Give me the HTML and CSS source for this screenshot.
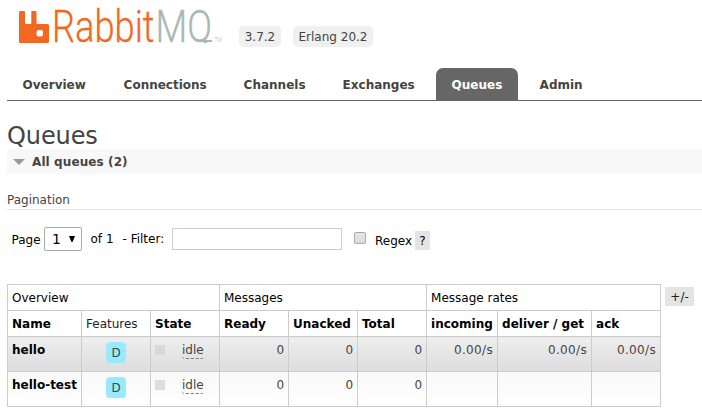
FILE: index.html
```html
<!DOCTYPE html>
<html lang="en">
<head>
<meta charset="utf-8">
<title>RabbitMQ Management</title>
<link rel="stylesheet" href="styles.css">
</head>
<body>
<header class="header">
  <svg class="logo" width="210" height="43" viewBox="0 0 210 43">
    <path class="mark" d="M1 11h4q1 0 1 1v11q0 1 1 1h4.300q1 0 1-1V12q0-1 1-1h3.200q1 0 1 1v11q0 1 1 1h10q1.500 0 1.500 1.500V41.500q0 1.500-1.500 1.500H1Q0 43 0 42V12Q0 11 1 11zM19.500 30q-2 0-2 2v2.500q0 2 2 2h2.500q2 0 2-2v-2.500q0-2-2-2z"/>
    <text class="rabbit" x="33" y="42" textLength="102.500" lengthAdjust="spacingAndGlyphs">Rabbit</text>
    <text class="mq" x="136.500" y="42" textLength="56.500" lengthAdjust="spacingAndGlyphs">MQ</text>
    <path class="tail" d="M182 41h11"/>
    <text class="tm" x="195.500" y="42" textLength="7.500" lengthAdjust="spacingAndGlyphs">TM</text>
  </svg>
  <span class="version v1">3.7.2</span>
  <span class="version v2">Erlang 20.2</span>
</header>
<nav class="tabs">
  <a class="overview">Overview</a>
  <a class="connections">Connections</a>
  <a class="channels">Channels</a>
  <a class="exchanges">Exchanges</a>
  <a class="queues selected">Queues</a>
  <a class="admin">Admin</a>
</nav>
<main>
  <h1>Queues</h1>
  <h2><svg width="12" height="6" viewBox="0 0 12 6"><path d="M0 0h12L6 6z"/></svg><span>All queues (2)</span></h2>
  <h3>Pagination</h3>
  <div class="filters">
    <span class="page">Page</span>
    <span class="select"><span>1</span><svg width="6" height="6" viewBox="0 0 6 6"><path d="M0 0h6L3.500 6h-1z"/></svg></span>
    <span class="of">of 1</span>
    <span class="label">- Filter:</span>
    <span class="input"></span>
    <span class="checkbox"></span>
    <span class="regex">Regex</span>
    <span class="help">?</span>
  </div>
  <div class="listing">
    <table>
      <colgroup><col class="c74"><col class="c69"><col class="c69"><col class="c69"><col class="c69"><col class="c69"><col class="c71"><col class="c94"><col class="c69"></colgroup>
      <thead>
        <tr><th colspan="3">Overview</th><th colspan="3">Messages</th><th colspan="3">Message rates</th></tr>
        <tr><th class="b">Name</th><th><span class="feat">Features</span></th><th class="b">State</th><th class="b">Ready</th><th class="b">Unacked</th><th class="b">Total</th><th class="b">incoming</th><th class="b">deliver / get</th><th class="b">ack</th></tr>
      </thead>
      <tbody>
        <tr class="alt"><td class="name">hello</td><td class="c"><span class="durable">D</span></td><td><span class="state"><i></i><abbr>idle</abbr></span></td><td class="r">0</td><td class="r">0</td><td class="r">0</td><td class="r rate">0.00/s</td><td class="r rate">0.00/s</td><td class="r rate">0.00/s</td></tr>
        <tr class="plain"><td class="name">hello-test</td><td class="c"><span class="durable">D</span></td><td><span class="state"><i></i><abbr>idle</abbr></span></td><td class="r">0</td><td class="r">0</td><td class="r">0</td><td></td><td></td><td></td></tr>
      </tbody>
    </table>
    <span class="columns">+/-</span>
  </div>
</main>
</body>
</html>
```
FILE: styles.css
```css
* { box-sizing: border-box; }
body { margin: 0; padding-left: 7px; height: 420px; overflow: hidden; background: #fff; color: #444; font: 12px/16px "DejaVu Sans", sans-serif; white-space: nowrap; }
.header { display: flex; height: 68px; padding-left: 12px; }
.logo { flex: none; overflow: hidden; }
.mark { fill: #f26822; fill-rule: evenodd; }
.rabbit, .mq { font: 300 44.500px Roboto, sans-serif; }
.rabbit { fill: #f26822; stroke: #f26822; stroke-width: .3px; }
.mq { fill: #a9b8b1; stroke: #a9b8b1; stroke-width: .3px; }
.tail { stroke: #a9b8b1; stroke-width: 2px; }
.tm { font: 300 7px Roboto, sans-serif; fill: #a9b8b1; }
.version { height: 21px; margin-top: 26px; line-height: 22px; text-align: center; background: #f0f0f0; border-radius: 5px; }
.v1 { width: 42px; margin-left: 10px; }
.v2 { width: 80px; margin-left: 12px; }
.tabs { display: flex; height: 33px; border-bottom: 1px solid #666; font-weight: bold; }
.tabs a { padding-left: 15.6px; line-height: 34px; }
.tabs .overview { width: 101px; }
.tabs .connections { width: 120px; }
.tabs .channels { width: 99px; }
.tabs .exchanges { width: 109px; }
.tabs .queues { width: 82px; margin-right: 6px; }
.tabs .selected { color: #fff; background: #666; border-radius: 7px 7px 0 0; }
h1, h2, h3 { margin: 0; font-weight: normal; }
h1 { height: 48px; padding-top: 20px; font-size: 24px; line-height: 30px; letter-spacing: -.1px; }
h2 { display: flex; align-items: center; height: 25px; padding-left: 6px; background: #f8f8f8; font-size: 12px; font-weight: bold; letter-spacing: .1px; }
h2 svg { margin-right: 7px; fill: #999; }
h3 { height: 36px; padding-top: 18px; border-bottom: 1px solid #e4e4e4; font-size: 12px; line-height: 16px; }
.filters { display: flex; height: 74px; padding: 17px 0 0 4.500px; color: #000; }
.page { width: 32.500px; padding-top: 5px; }
.select { display: flex; align-items: center; justify-content: space-between; width: 38px; height: 24px; padding: 0 6px 0 7px; border: 1px solid #aaa; border-radius: 2px; font-size: 14px; }
.of { width: 32px; margin-left: 8.500px; padding-top: 4px; }
.label { width: 49.500px; padding-top: 4px; }
.input { width: 170px; height: 22px; margin-top: 1px; border: 1px solid #ccc; }
.checkbox { width: 12px; height: 12px; margin: 5px 0 0 12px; border: 1px solid #aaa; border-radius: 2px; background: linear-gradient(#e6e6e6, #dcdcdc); }
.regex { width: 40px; margin-left: 9px; padding-top: 6px; }
.help { width: 15px; height: 19px; margin-top: 4px; line-height: 20px; text-align: center; background: #e4e4e4; }
.listing { display: flex; align-items: flex-start; }
table { width: 654px; flex: none; border-collapse: collapse; table-layout: fixed; }
.c74 { width: 74px; } .c69 { width: 69px; } .c71 { width: 71px; } .c94 { width: 94px; }
th, td { padding: 4px; border: 1px solid #ccc; vertical-align: top; text-align: left; font-weight: normal; line-height: 18px; }
th { height: 26px; padding-bottom: 3px; color: #000; }
td { height: 35px; }
th.b, td.name { color: #000; font-weight: bold; }
.feat { color: #222; }
.alt td { background: linear-gradient(#eee, #ddd); }
.plain td { background: linear-gradient(#f8f8f8, #fff); }
.r { text-align: right; }
.rate { letter-spacing: .35px; }
.c { text-align: center; }
.durable { display: block; width: 20px; height: 21px; margin: 1px auto 0 20px; line-height: 22px; background: #98ebff; border-radius: 4px; }
.state { display: flex; }
.state i { width: 10px; height: 10px; margin: 4px 17px 0 0; background: #ddd; }
.alt .state i { background: #d8d8d8; }
abbr { height: 18px; line-height: 18px; border-bottom: 1px dashed #777; border-radius: 3px; }
.columns { width: 29px; height: 19px; margin: 3px 0 0 4px; line-height: 20px; text-align: center; background: #e4e4e4; color: #222; }
```
